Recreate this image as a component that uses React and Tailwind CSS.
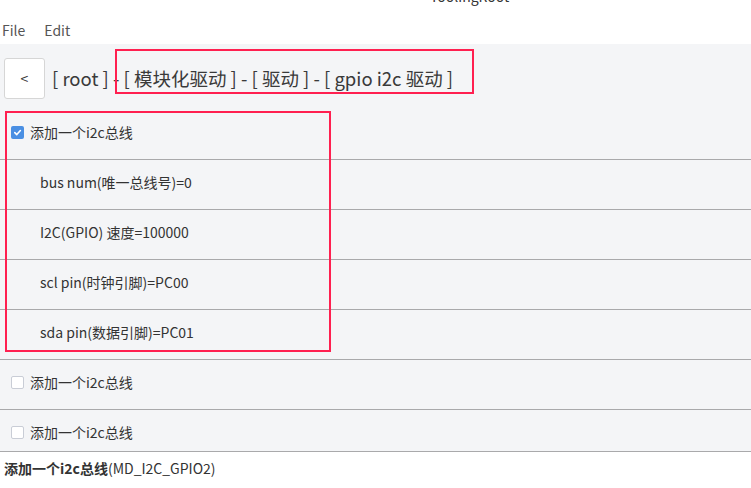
import React from "react";

const font = { fontFamily: '"Noto Sans CJK SC", "Noto Sans", sans-serif' };

function Check({ checked }) {
  if (checked) {
    return (
      <span className="flex h-[13px] w-[13px] items-center justify-center rounded-[2px] bg-[#4a8fe3]">
        <svg width="9" height="9" viewBox="0 0 10 10">
          <path d="M2 5.2 L4.2 7.3 L8.2 2.8" fill="none" stroke="white" strokeWidth="1.8" strokeLinecap="round" strokeLinejoin="round" />
        </svg>
      </span>
    );
  }
  return <span className="block h-[13px] w-[13px] rounded-[2px] border border-[#c9cdd6] bg-white" />;
}

function Row({ children }) {
  return (
    <div className="flex h-[50px] shrink-0 items-center border-b border-[#a9a9ab] pb-[5px]">
      {children}
    </div>
  );
}

export default function App() {
  return (
    <div className="relative flex h-[488px] w-[751px] flex-col overflow-hidden bg-white text-[#333]" style={font}>
      <div className="h-[18px] shrink-0 overflow-hidden pl-[430px]">
        <div className="mt-[-14px] text-[14px] leading-[20px] text-[#333]">ToolingRoot</div>
      </div>
      <div className="flex h-[26px] shrink-0 items-center gap-[19px] pb-[2px] pl-[2px] text-[14px] text-[#555]">
        <span>File</span>
        <span>Edit</span>
      </div>
      <div className="flex min-h-0 flex-1 flex-col overflow-hidden bg-[#f4f5f7]">
        <div className="flex h-[66px] shrink-0 items-start pl-[4px] pt-[14px]">
          <div className="flex h-[41px] w-[41px] items-center justify-center rounded-[3px] border border-[#d6d6d6] bg-white text-[14px] text-[#333]">
            &lt;
          </div>
          <div className="ml-[7px] mt-[6px] text-[18.5px] leading-[28px] text-[#3a3a3a]">
            [ root ] - [ 模块化驱动 ] - [ 驱动 ] - [ gpio i2c 驱动 ]
          </div>
        </div>
        <Row>
          <div className="flex items-center pl-[11px]">
            <Check checked />
            <span className="ml-[6px] text-[14px]">添加一个i2c总线</span>
          </div>
        </Row>
        <Row><span className="pl-[40px] text-[14px]">bus num(唯一总线号)=0</span></Row>
        <Row><span className="pl-[40px] text-[14px]">I2C(GPIO) 速度=100000</span></Row>
        <Row><span className="pl-[40px] text-[14px]">scl pin(时钟引脚)=PC00</span></Row>
        <Row><span className="pl-[40px] text-[14px]">sda pin(数据引脚)=PC01</span></Row>
        <Row>
          <div className="flex items-center pl-[11px]">
            <Check />
            <span className="ml-[6px] text-[14px]">添加一个i2c总线</span>
          </div>
        </Row>
        <Row>
          <div className="flex items-center pl-[11px]">
            <Check />
            <span className="ml-[6px] text-[14px]">添加一个i2c总线</span>
          </div>
        </Row>
      </div>
      <div className="flex h-[37px] shrink-0 items-center border-t border-[#a9a9ab] bg-white pb-[4px] pl-[4px] text-[14px] text-[#333]">
        <span className="font-bold">添加一个i2c总线</span>
        <span>(MD_I2C_GPIO2)</span>
      </div>

      <div className="pointer-events-none absolute left-[115px] top-[49px] h-[45px] w-[359px] border-2 border-[#ff2050]" />
      <div className="pointer-events-none absolute left-[5px] top-[111px] h-[241px] w-[326px] border-2 border-[#ff2050]" />
    </div>
  );
}
